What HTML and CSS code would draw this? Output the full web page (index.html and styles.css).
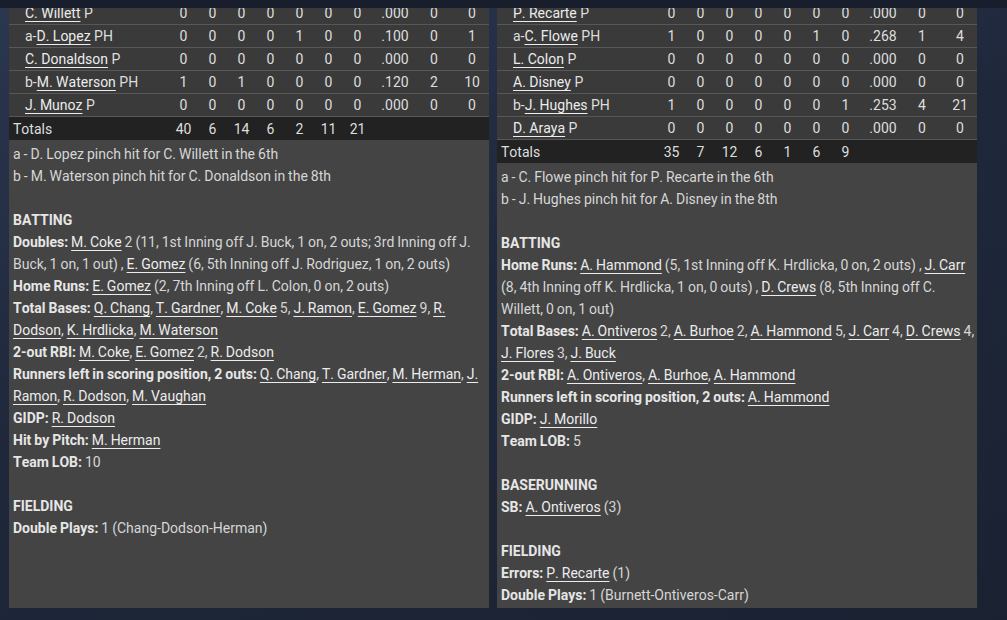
FILE: index.html
```html
<!DOCTYPE html>
<html>
<head>
<meta charset="utf-8">
<link rel="stylesheet" href="styles.css">
</head>
<body>
<div class="topbar"></div>
<div class="page">
  <section class="panel">
    <div class="box">
      <div class="row"><div class="name"><a>C. Willett</a> P</div><span>0</span><span>0</span><span>0</span><span>0</span><span>0</span><span>0</span><span>0</span><span class="avg">.000</span><span>0</span><span class="last">0</span></div>
      <div class="row"><div class="name">a-<a>D. Lopez</a> PH</div><span>0</span><span>0</span><span>0</span><span>0</span><span>1</span><span>0</span><span>0</span><span class="avg">.100</span><span>0</span><span class="last">1</span></div>
      <div class="row"><div class="name"><a>C. Donaldson</a> P</div><span>0</span><span>0</span><span>0</span><span>0</span><span>0</span><span>0</span><span>0</span><span class="avg">.000</span><span>0</span><span class="last">0</span></div>
      <div class="row"><div class="name">b-<a>M. Waterson</a> PH</div><span>1</span><span>0</span><span>1</span><span>0</span><span>0</span><span>0</span><span>0</span><span class="avg">.120</span><span>2</span><span class="last">10</span></div>
      <div class="row"><div class="name"><a>J. Munoz</a> P</div><span>0</span><span>0</span><span>0</span><span>0</span><span>0</span><span>0</span><span>0</span><span class="avg">.000</span><span>0</span><span class="last">0</span></div>
      <div class="row totals"><div class="name">Totals</div><span>40</span><span>6</span><span>14</span><span>6</span><span>2</span><span>11</span><span>21</span><span class="avg"></span><span></span><span class="last"></span></div>
    </div>
    <div class="notes">
      <p>a - D. Lopez pinch hit for C. Willett in the 6th</p>
      <p>b - M. Waterson pinch hit for C. Donaldson in the 8th</p>
      <h3>BATTING</h3>
      <p><b>Doubles:</b> <a>M. Coke</a> 2 (11, 1st Inning off J. Buck, 1 on, 2 outs; 3rd Inning off J. Buck, 1 on, 1 out) , <a>E. Gomez</a> (6, 5th Inning off J. Rodriguez, 1 on, 2 outs)</p>
      <p><b>Home Runs:</b> <a>E. Gomez</a> (2, 7th Inning off L. Colon, 0 on, 2 outs)</p>
      <p><b>Total Bases:</b> <a>Q. Chang</a>, <a>T. Gardner</a>, <a>M. Coke</a> 5, <a>J. Ramon</a>, <a>E. Gomez</a> 9, <a>R. Dodson</a>, <a>K. Hrdlicka</a>, <a>M. Waterson</a></p>
      <p><b>2-out RBI:</b> <a>M. Coke</a>, <a>E. Gomez</a> 2, <a>R. Dodson</a></p>
      <p><b>Runners left in scoring position, 2 outs:</b> <a>Q. Chang</a>, <a>T. Gardner</a>, <a>M. Herman</a>, <a>J. Ramon</a>, <a>R. Dodson</a>, <a>M. Vaughan</a></p>
      <p><b>GIDP:</b> <a>R. Dodson</a></p>
      <p><b>Hit by Pitch:</b> <a>M. Herman</a></p>
      <p><b>Team LOB:</b> 10</p>
      <h3>FIELDING</h3>
      <p><b>Double Plays:</b> 1 (Chang-Dodson-Herman)</p>
    </div>
  </section>
  <section class="panel">
    <div class="box">
      <div class="row"><div class="name"><a>P. Recarte</a> P</div><span>0</span><span>0</span><span>0</span><span>0</span><span>0</span><span>0</span><span>0</span><span class="avg">.000</span><span>0</span><span class="last">0</span></div>
      <div class="row"><div class="name">a-<a>C. Flowe</a> PH</div><span>1</span><span>0</span><span>0</span><span>0</span><span>0</span><span>1</span><span>0</span><span class="avg">.268</span><span>1</span><span class="last">4</span></div>
      <div class="row"><div class="name"><a>L. Colon</a> P</div><span>0</span><span>0</span><span>0</span><span>0</span><span>0</span><span>0</span><span>0</span><span class="avg">.000</span><span>0</span><span class="last">0</span></div>
      <div class="row"><div class="name"><a>A. Disney</a> P</div><span>0</span><span>0</span><span>0</span><span>0</span><span>0</span><span>0</span><span>0</span><span class="avg">.000</span><span>0</span><span class="last">0</span></div>
      <div class="row"><div class="name">b-<a>J. Hughes</a> PH</div><span>1</span><span>0</span><span>0</span><span>0</span><span>0</span><span>0</span><span>1</span><span class="avg">.253</span><span>4</span><span class="last">21</span></div>
      <div class="row"><div class="name"><a>D. Araya</a> P</div><span>0</span><span>0</span><span>0</span><span>0</span><span>0</span><span>0</span><span>0</span><span class="avg">.000</span><span>0</span><span class="last">0</span></div>
      <div class="row totals"><div class="name">Totals</div><span>35</span><span>7</span><span>12</span><span>6</span><span>1</span><span>6</span><span>9</span><span class="avg"></span><span></span><span class="last"></span></div>
    </div>
    <div class="notes">
      <p>a - C. Flowe pinch hit for P. Recarte in the 6th</p>
      <p>b - J. Hughes pinch hit for A. Disney in the 8th</p>
      <h3>BATTING</h3>
      <p><b>Home Runs:</b> <a>A. Hammond</a> (5, 1st Inning off K. Hrdlicka, 0 on, 2 outs) , <a>J. Carr</a> (8, 4th Inning off K. Hrdlicka, 1 on, 0 outs) , <a>D. Crews</a> (8, 5th Inning off C. Willett, 0 on, 1 out)</p>
      <p><b>Total Bases:</b> <a>A. Ontiveros</a> 2, <a>A. Burhoe</a> 2, <a>A. Hammond</a> 5, <a>J. Carr</a> 4, <a>D. Crews</a> 4, <a>J. Flores</a> 3, <a>J. Buck</a></p>
      <p><b>2-out RBI:</b> <a>A. Ontiveros</a>, <a>A. Burhoe</a>, <a>A. Hammond</a></p>
      <p><b>Runners left in scoring position, 2 outs:</b> <a>A. Hammond</a></p>
      <p><b>GIDP:</b> <a>J. Morillo</a></p>
      <p><b>Team LOB:</b> 5</p>
      <h3>BASERUNNING</h3>
      <p><b>SB:</b> <a>A. Ontiveros</a> (3)</p>
      <h3>FIELDING</h3>
      <p><b>Errors:</b> <a>P. Recarte</a> (1)</p>
      <p><b>Double Plays:</b> 1 (Burnett-Ontiveros-Carr)</p>
    </div>
  </section>
</div>
</body>
</html>
```

FILE: styles.css
```css
html, body {
  margin: 0;
  padding: 0;
}
body {
  width: 1007px;
  height: 620px;
  overflow: hidden;
  background: linear-gradient(160deg, #2b3650 0%, #1f283b 45%, #1a2232 100%);
  font-family: Roboto, "Liberation Sans", sans-serif;
  font-size: 14px;
  color: #d6d6d6;
  font-kerning: none;
}
.topbar {
  position: fixed;
  top: 0;
  left: 0;
  right: 0;
  height: 8px;
  background: #181e2b;
  z-index: 2;
}
.page {
  display: flex;
  gap: 8px;
  padding: 2px 0 0 9px;
  height: 606px;
}
.panel {
  width: 480px;
  display: flex;
  flex-direction: column;
}
.box {
  background: #3a3a3a;
}
.row {
  display: grid;
  grid-template-columns: 160px repeat(7, 29px) 46px 32px 39px;
  height: 23px;
  box-sizing: border-box;
  border-bottom: 1px solid #575757;
  align-items: center;
  color: #dedede;
}
.row span {
  text-align: center;
}
.row .last {
  padding-left: 5px;
}
.name {
  padding-left: 16px;
  white-space: nowrap;
}
.row a, .notes a {
  text-decoration: underline;
  text-underline-offset: 3px;
  color: #ececec;
}
.row.totals {
  background: #222222;
  border-bottom: none;
}
.row.totals .name {
  padding-left: 4px;
}
.notes {
  flex: 1;
  background: #444444;
  padding: 3px 0 2px 4px;
  line-height: 22px;
  word-spacing: -0.5px;
}
.notes p {
  margin: 0;
}
.notes h3 {
  margin: 22px 0 0;
  font-size: 14px;
  font-weight: 700;
  line-height: 22px;
  color: #e6e6e6;
}
.notes b {
  font-weight: 700;
  color: #e6e6e6;
}
```
